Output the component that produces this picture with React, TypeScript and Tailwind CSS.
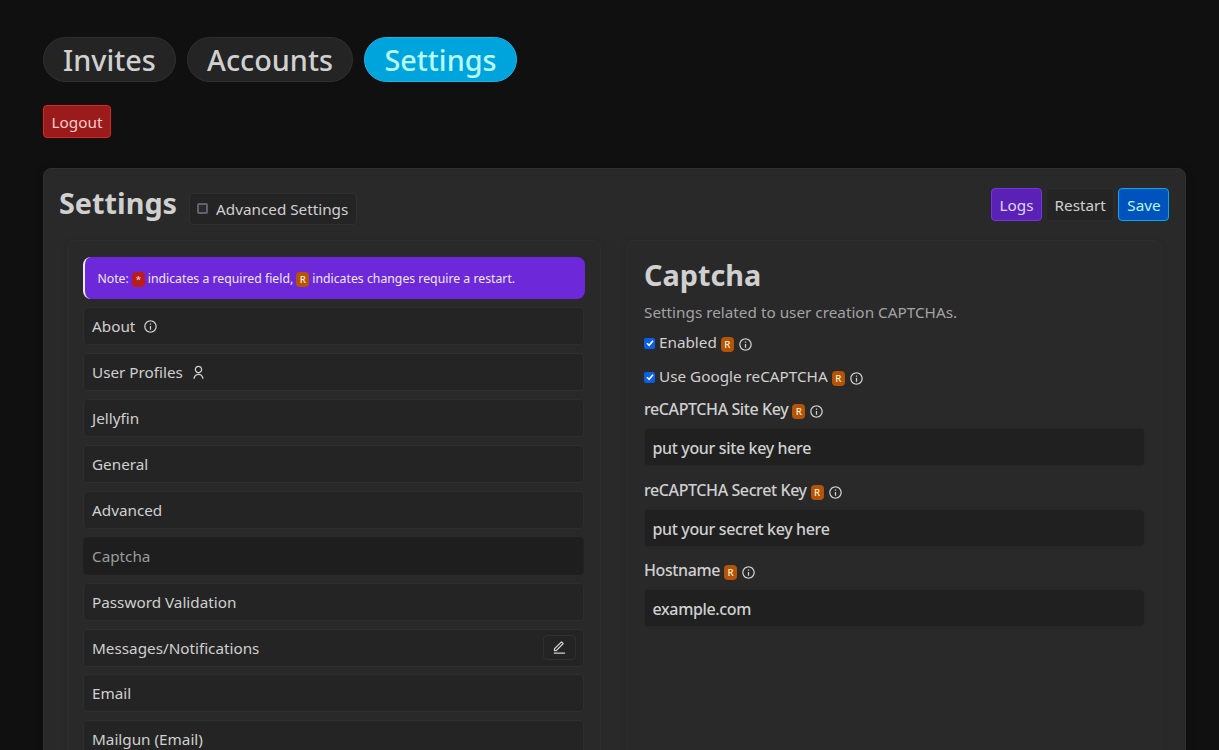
import type { ReactNode } from "react";
import { RiEditLine, RiInformationLine, RiUserLine } from "react-icons/ri";

type Section = { name: string; icon?: ReactNode; editable?: boolean; active?: boolean };

const sections: Section[] = [
  { name: "About", icon: <RiInformationLine className="size-[15px]" /> },
  { name: "User Profiles", icon: <RiUserLine className="size-[15px]" /> },
  { name: "Jellyfin" },
  { name: "General" },
  { name: "Advanced" },
  { name: "Captcha", active: true },
  { name: "Password Validation" },
  { name: "Messages/Notifications", editable: true },
  { name: "Email" },
  { name: "Mailgun (Email)" },
];

function Restart() {
  return (
    <span className="inline-flex h-[15px] w-[13px] shrink-0 items-center justify-center rounded-[4px] bg-[#b45309] pt-px text-[9.7px] leading-none font-medium text-[#fef3c7]">
      R
    </span>
  );
}

function Marks() {
  return (
    <span className="mt-[3px] flex items-center">
      <Restart />
      <RiInformationLine className="ml-[4px] size-[15px]" />
    </span>
  );
}

function Toggle({ label }: { label: string }) {
  return (
    <label className="flex h-[34px] items-center">
      <span className="mr-[4px] flex h-[11px] w-[11px] items-center justify-center rounded-[2px] bg-[#0a5fe8]">
        <svg viewBox="0 0 10 10" className="size-[10px] fill-none stroke-white stroke-[1.6]">
          <path d="M2 5.2 4.1 7.3 8 2.7" />
        </svg>
      </span>
      <span className="mr-[4px] mb-[2px] text-[15.28px]">{label}</span>
      <span className="-mt-px flex">
        <Marks />
      </span>
    </label>
  );
}

function Field({ label, value }: { label: string; value: string }) {
  return (
    <div className="mb-[12.4px]">
      <div className="flex h-[26px] items-center">
        <span className="mr-[4px] mb-[1.6px] text-[16px] font-medium tracking-[-0.4px]">{label}</span>
        <Marks />
      </div>
      <input
        defaultValue={value}
        className="mt-[6.2px] ml-px block h-[36px] w-[499px] rounded-[4px] bg-[#202020] px-[7.5px] pt-[2px] text-[16px] font-medium tracking-[-0.35px] shadow-[0_0_3px_rgba(0,0,0,0.15)] outline-none"
      />
    </div>
  );
}

export default function App() {
  return (
    <div className="h-[750px] overflow-hidden bg-[#101010] pt-[37px] pr-[33px] pl-[43px] font-['Noto_Sans',sans-serif] text-[#d0d0d0]">
      <nav className="flex gap-[11px] text-[28.8px] leading-none font-medium">
        <button className="h-[45px] w-[133px] rounded-full border border-[#303030] bg-[#242424] pt-[2px]">Invites</button>
        <button className="h-[45px] w-[166px] rounded-full border border-[#303030] bg-[#242424] pt-[2px]">Accounts</button>
        <button className="h-[45px] w-[153px] rounded-full border border-[#1fb2e6] bg-[#00a4dc] pt-[2px] text-[#b8f8ff]">Settings</button>
      </nav>
      <button className="mt-[23px] block h-[33px] w-[68px] rounded-[4px] border border-[#dc2626] bg-[#991b1b] pt-[2px] text-[15.28px] text-[#fecaca]">
        Logout
      </button>
      <main className="mt-[30px] h-[700px] rounded-[8px] border border-[#303030] bg-[#292929] px-[15px] shadow-[0_1px_8px_rgba(0,0,0,0.2)]">
        <header className="flex h-[71px] items-start justify-between">
          <div className="flex items-start">
            <h1 className="mt-[14px] text-[28.8px] leading-[40px] font-bold">Settings</h1>
            <label className="mt-[24px] ml-[12px] flex h-[32px] w-[168px] items-center rounded-[4px] border border-[#303030] bg-[#242424] pl-[7px] text-[15.28px]">
              <span className="mr-[8px] size-[11px] -translate-y-px rounded-[2px] border-2 border-[#62606d] bg-[#2b2a33]" />
              Advanced Settings
            </label>
          </div>
          <div className="mt-[19.4px] mr-[0.6px] flex gap-[4.2px] text-[15.28px]">
            <button className="h-[33px] w-[51px] rounded-[4px] border border-[#7434e0] bg-[#5b21b6] pt-px text-[#ddd6fe]">Logs</button>
            <button className="h-[33px] w-[68px] rounded-[4px] border border-[#2c2c2c] bg-[#242424] pt-px">Restart</button>
            <button className="h-[33px] w-[51px] rounded-[4px] border border-[#0ea5e9] bg-[#0053bc] pt-px text-[#b8f8ff]">Save</button>
          </div>
        </header>
        <div className="flex gap-[25px] px-[8px]">
          <section className="h-[600px] w-[534px] rounded-[8px] border border-[#2d2d2d] px-[15px] pt-[16px] shadow-[0_0_6px_rgba(0,0,0,0.08)]">
            <div className="flex h-[42px] w-[502px] items-center rounded-[8px] border-l-2 border-[#ede9fe] bg-[#6d28d9] pl-[12.4px] text-[12.28px] text-[#ede9fe]">
              <span className="mt-[2px]">Note:</span>
              <span className="mx-[3px] mt-[2px] flex h-[15px] w-[13px] items-center justify-center rounded-[4px] bg-[#b91c1c] pt-px text-[9.7px] leading-none font-medium text-[#fecaca]">*</span>
              <span className="mt-[2px]">indicates a required field,</span>
              <span className="mx-[3px] mt-[2px] flex"><Restart /></span>
              <span className="mt-[2px]">indicates changes require a restart.</span>
            </div>
            <ul className="mt-[8.3px] flex flex-col gap-[7.9px]">
              {sections.map((s) => (
                <li
                  key={s.name}
                  className={
                    s.active
                      ? "flex h-[38px] w-[501px] shrink-0 items-center rounded-[4px] border border-[#212121] bg-[#1e1e1e] px-[8px] pt-[0.9px] text-[15.28px] text-[#9b9b9b]"
                      : "flex h-[38px] w-[501px] shrink-0 items-center rounded-[4px] border border-[#2e2e2e] bg-[#242424] px-[8px] pt-[0.9px] text-[15.28px]"
                  }
                >
                  <span>{s.name}</span>
                  {s.icon && <span className="ml-[8px]">{s.icon}</span>}
                  {s.editable && (
                    <button className="mr-[-1px] ml-auto flex h-[25px] w-[33px] items-center justify-center rounded-[4px] border border-[#303030] bg-[#242424]">
                      <RiEditLine className="size-[15px]" />
                    </button>
                  )}
                </li>
              ))}
            </ul>
          </section>
          <section className="h-[600px] w-[536px] rounded-[8px] border border-[#2d2d2d] px-[17px] pt-[14px] shadow-[0_0_6px_rgba(0,0,0,0.08)]">
            <h2 className="text-[28.8px] leading-[40px] font-bold">Captcha</h2>
            <p className="mt-[5px] text-[15.3px] leading-[24px] text-[#a3a3a3]">Settings related to user creation CAPTCHAs.</p>
            <div className="mt-[2px]">
              <Toggle label="Enabled" />
              <Toggle label="Use Google reCAPTCHA" />
            </div>
            <div className="mt-[3px]">
              <Field label="reCAPTCHA Site Key" value="put your site key here" />
              <Field label="reCAPTCHA Secret Key" value="put your secret key here" />
              <Field label="Hostname" value="example.com" />
            </div>
          </section>
        </div>
      </main>
    </div>
  );
}
